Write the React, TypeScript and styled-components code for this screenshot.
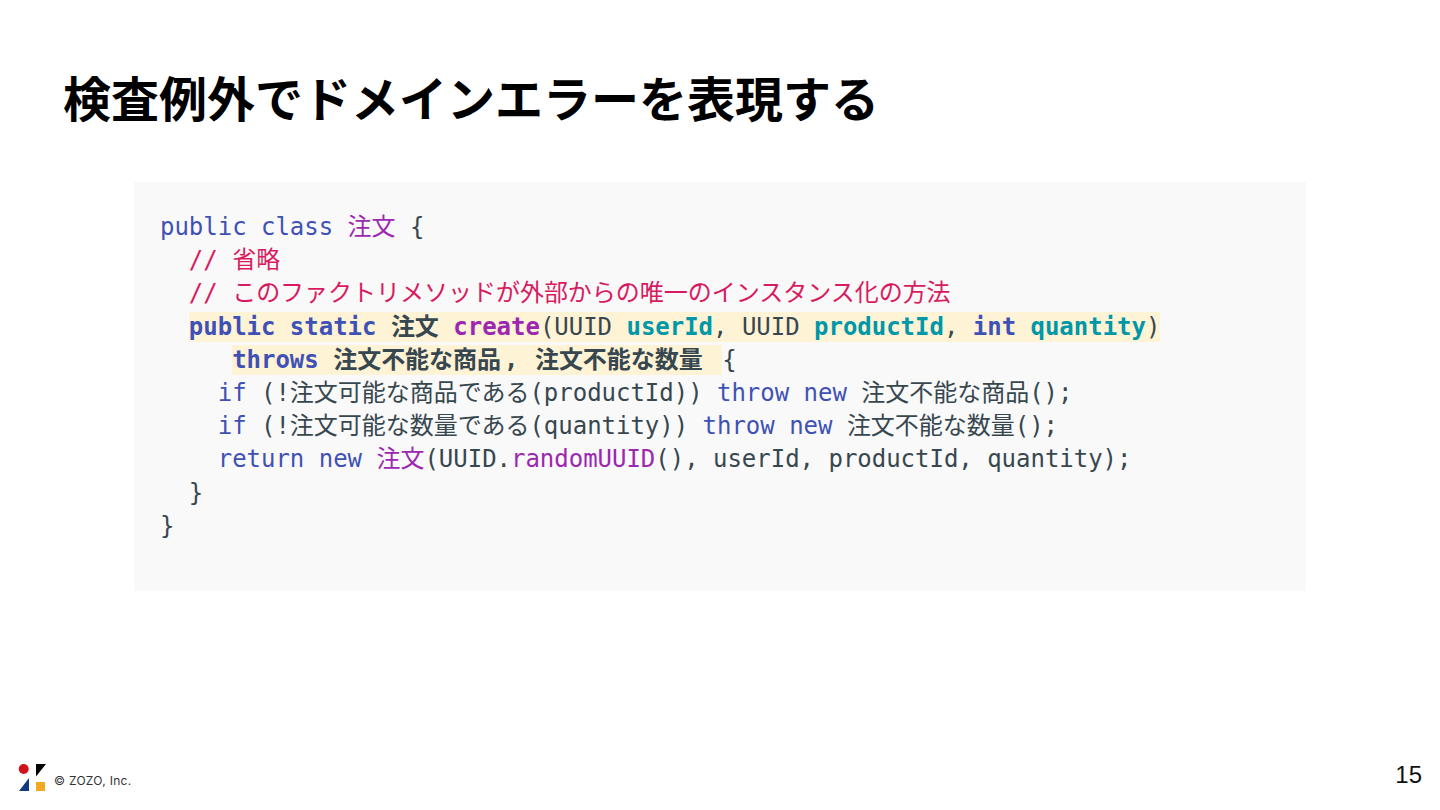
import React from "react";
import styled, { createGlobalStyle } from "styled-components";

const Global = createGlobalStyle`
  html, body { margin: 0; padding: 0; background: #fff; }
`;

const Slide = styled.div`
  width: 1440px;
  height: 810px;
  box-sizing: border-box;
  display: flex;
  flex-direction: column;
  overflow: hidden;
  background: #fff;
  font-family: "Roboto", "Noto Sans CJK JP", sans-serif;
`;

const Title = styled.h1`
  margin: 0;
  padding: 65px 0 0 63px;
  height: 182px;
  box-sizing: border-box;
  font: 700 48px/72px "Roboto", "Noto Sans CJK JP", sans-serif;
  color: #000;
`;

const CodeBox = styled.pre`
  margin: 0 134px;
  width: 1172px;
  height: 409px;
  box-sizing: border-box;
  padding: 29px 26px 0;
  background: #f9f9f9;
  font-family: "DejaVu Sans Mono", "Noto Sans CJK JP", monospace;
  font-size: 24px;
  letter-spacing: -0.02px;
  color: #37474f;
  overflow: hidden;
`;

const Line = styled.div`
  height: 33.2px;
  line-height: 33.2px;
  white-space: pre;
`;

const Kw = styled.span<{ $bold?: boolean }>`
  color: #3f51b5;
  font-weight: ${(p) => (p.$bold ? 700 : 400)};
`;
const Ref = styled.span<{ $bold?: boolean }>`
  color: #9c27b0;
  font-weight: ${(p) => (p.$bold ? 700 : 400)};
`;
const Comment = styled.span`color: #d81b60;`;
const Param = styled.span`
  color: #0097a7;
  font-weight: 700;
`;
const Strong = styled.span`font-weight: 700;`;
const Mark = styled.span<{ $endGap?: number }>`
  background: #fff3d6;
  padding: 1px ${(p) => p.$endGap ?? 0}px 1px 0;
`;
const Comma = styled.span`
  margin: 0 2px 0 3px;
`;

const Footer = styled.footer`
  margin-top: auto;
  height: 46px;
  display: flex;
  align-items: flex-start;
  padding: 0 18px;
`;

const Logo = styled.svg`
  width: 28px;
  height: 27px;
  display: block;
`;

const Copy = styled.span`
  margin: 10px 0 0 8px;
  font: 400 12px/14px "Inter", "Liberation Sans", sans-serif;
  letter-spacing: 0.3px;
  color: #333;
`;

const PageNo = styled.span`
  margin: -3px 0 0 auto;
  font: 400 24px/28px "Liberation Sans", sans-serif;
  color: #111;
`;

export default function App() {
  return (
    <Slide>
      <Global />
      <Title>検査例外でドメインエラーを表現する</Title>
      <CodeBox>
        <Line><Kw>public class</Kw> <Ref>注文</Ref> {"{"}</Line>
        <Line>  <Comment>// 省略</Comment></Line>
        <Line>  <Comment>// このファクトリメソッドが外部からの唯一のインスタンス化の方法</Comment></Line>
        <Line>  <Mark><Kw $bold>public static</Kw> <Strong>注文</Strong> <Ref $bold>create</Ref>(UUID <Param>userId</Param>, UUID <Param>productId</Param>, <Kw $bold>int</Kw> <Param>quantity</Param>)</Mark></Line>
        <Line>     <Mark $endGap={5}><Kw $bold>throws</Kw> <Strong>注文不能な商品<Comma>,</Comma> 注文不能な数量 </Strong></Mark>{"{"}</Line>
        <Line>    <Kw>if</Kw> (!注文可能な商品である(productId)) <Kw>throw new</Kw> 注文不能な商品();</Line>
        <Line>    <Kw>if</Kw> (!注文可能な数量である(quantity)) <Kw>throw new</Kw> 注文不能な数量();</Line>
        <Line>    <Kw>return new</Kw> <Ref>注文</Ref>(UUID.<Ref>randomUUID</Ref>(), userId, productId, quantity);</Line>
        <Line>  {"}"}</Line>
        <Line>{"}"}</Line>
      </CodeBox>
      <Footer>
        <Logo viewBox="0 0 28 27">
          <circle cx="5.7" cy="5" r="5" fill="#d0121b" />
          <path d="M18 0H28L18 12.5Z" fill="#000" />
          <path d="M1 27L11 14V27Z" fill="#123a80" />
          <rect x="18" y="18" width="9" height="9" fill="#f3a91f" />
        </Logo>
        <Copy>© ZOZO, Inc.</Copy>
        <PageNo>15</PageNo>
      </Footer>
    </Slide>
  );
}
